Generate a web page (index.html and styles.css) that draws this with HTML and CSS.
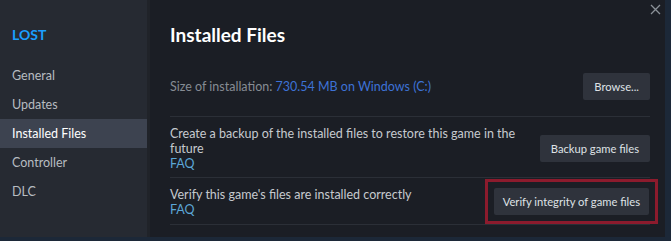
FILE: index.html
```html
<!DOCTYPE html>
<html>
<head>
<meta charset="utf-8">
<link rel="stylesheet" href="styles.css">
</head>
<body>
<div class="window">
  <nav class="sidebar">
    <div class="game">LOST</div>
    <ul class="menu">
      <li class="item">General</li>
      <li class="item">Updates</li>
      <li class="item active">Installed Files</li>
      <li class="item">Controller</li>
      <li class="item">DLC</li>
    </ul>
  </nav>
  <main class="main">
    <div class="close">
      <svg width="11" height="11" viewBox="0 0 11 11"><path d="M1 1L10 10M10 1L1 10" stroke="#8b9198" stroke-width="1.3" fill="none"/></svg>
    </div>
    <h1 class="title">Installed Files</h1>
    <div class="row row-size">
      <div class="text"><span class="muted">Size of installation: </span><span class="size">730.54 MB on Windows (C:)</span></div>
      <button class="btn">Browse...</button>
    </div>
    <div class="row row-backup">
      <div class="text">Create a backup of the installed files to restore this game in the future<br><span class="faq">FAQ</span></div>
      <button class="btn">Backup game files</button>
    </div>
    <div class="row row-verify">
      <div class="text">Verify this game's files are installed correctly<br><span class="faq">FAQ</span></div>
      <div class="highlight"><button class="btn btn-verify">Verify integrity of game files</button></div>
    </div>
  </main>
</div>
</body>
</html>
```
FILE: styles.css
```css
html, body {
  margin: 0;
  padding: 0;
  background: #1c2838;
  width: 671px;
  height: 241px;
  overflow: hidden;
}
body {
  font-family: "Lato", "Noto Sans", sans-serif;
}
.window {
  display: flex;
  width: 665px;
  height: 237px;
}
.sidebar {
  width: 147px;
  background: #262a32;
  border-right: 3px solid #202329;
  flex-shrink: 0;
}
.game {
  color: #1a9fff;
  font-weight: 700;
  font-size: 14px;
  line-height: 20px;
  padding: 25px 0 0 12px;
}
.menu {
  list-style: none;
  margin: 16px 0 0;
  padding: 0;
}
.item {
  height: 29px;
  line-height: 30px;
  padding-left: 12px;
  font-size: 12.5px;
  color: #b7bcc1;
}
.item.active {
  background: #3d4350;
  color: #ffffff;
}
.main {
  position: relative;
  flex: 1;
  background: #1b1e25;
  padding: 0 15px 0 20px;
}
.close {
  position: absolute;
  top: 4px;
  right: 4px;
  width: 11px;
  height: 11px;
}
.close svg { display: block; }
.title {
  margin: 22px 0 0;
  font-size: 19px;
  line-height: 26px;
  font-weight: 700;
  color: #ffffff;
}
.row {
  display: flex;
  align-items: center;
  justify-content: space-between;
  border-bottom: 1px solid #2b2f37;
  font-size: 12.5px;
  line-height: 15px;
  color: #c6cacf;
}
.row-size {
  padding: 25px 0 16px;
}
.row-backup {
  padding: 9px 0 6px;
}
.row-verify {
  padding: 1px 0 0;
}
.text { flex: 1; padding-right: 10px; }
.muted { color: #868c94; }
.size { color: #3d72d6; }
.faq { color: #5ba6d6; }
.btn {
  font-family: inherit;
  font-size: 11.2px;
  color: #dfe2e6;
  background: #2f333c;
  border: none;
  border-radius: 2px;
  height: 27px;
  padding: 0 11px;
}
.btn-verify {
  padding: 0 9px;
}
.highlight {
  border: 3px solid #8c1b2d;
  padding: 6px;
  margin-right: -8px;
}
```
